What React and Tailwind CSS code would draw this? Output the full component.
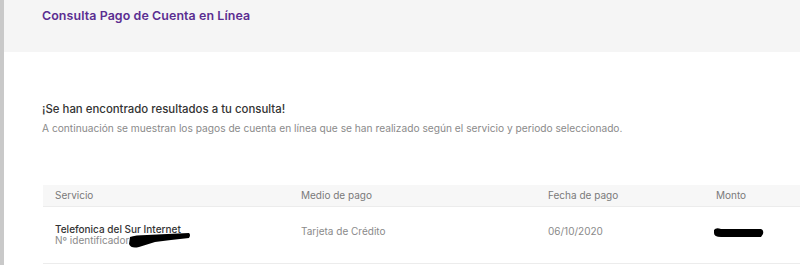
export default function App() {
  return (
    <div className="w-[800px] h-[265px] overflow-hidden flex bg-white font-['Inter',sans-serif]">
      {/* left frame strip */}
      <div className="w-[4px] shrink-0 bg-[#c9c9c9]" />

      <div className="flex-1 flex flex-col">
        {/* Header */}
        <div className="h-[52px] bg-[#f5f5f5] pl-[38px] pt-[7px]">
          <h1 className="text-[12.4px] font-semibold text-[#5b2e91] tracking-[0.1px]">
            Consulta Pago de Cuenta en Línea
          </h1>
        </div>

        {/* Result message */}
        <div className="pl-[38px] pt-[50px]">
          <p className="text-[11.4px] font-medium text-[#333] leading-[14px]">
            ¡Se han encontrado resultados a tu consulta!
          </p>
          <p className="text-[10.2px] text-[#8a8a8a] leading-[14px] mt-[5px]">
            A continuación se muestran los pagos de cuenta en línea que se han realizado según el servicio y periodo seleccionado.
          </p>
        </div>

        {/* Table */}
        <div className="ml-[39px] mt-[50px]">
          <div className="h-[22px] bg-[#f7f7f7] border-b border-[#ececec] grid grid-cols-[246px_247px_168px_1fr] items-center text-[10px] text-[#7a7a7a]">
            <span className="pl-[12px]">Servicio</span>
            <span className="pl-[12px]">Medio de pago</span>
            <span className="pl-[12px]">Fecha de pago</span>
            <span className="pl-[12px]">Monto</span>
          </div>
          <div className="h-[57px] border-b border-[#ececec] grid grid-cols-[246px_247px_168px_1fr] items-start pt-[17px] text-[10px]">
            <div className="pl-[12px] leading-[11px]">
              <div className="text-[#333] font-medium">Telefonica del Sur Internet</div>
              <div className="flex items-start text-[#8a8a8a]">
                <span>Nº identificador</span>
                <svg width="64" height="17" viewBox="0 0 64 17" className="-ml-[2px] -mt-[3px]">
                  <path d="M3 5 Q8 3 20 3 L40 2 L62 1 Q64 3 62 6 L44 8 L28 10 L12 15 Q4 17 2 12 Z" fill="#000" />
                </svg>
              </div>
            </div>
            <span className="pl-[12px] text-[#8a8a8a] leading-[12px] pt-[1px]">Tarjeta de Crédito</span>
            <span className="pl-[12px] text-[#8a8a8a] leading-[12px] pt-[1px]">06/10/2020</span>
            <div className="pl-[9px] pt-[3px]">
              <svg width="52" height="12" viewBox="0 0 52 12">
                <path d="M1 3 Q3 0 8 2 L48 2 Q51 3 50 7 L48 10 L8 10 Q1 10 1 6 Z" fill="#000" />
              </svg>
            </div>
          </div>
        </div>
      </div>
    </div>
  );
}
